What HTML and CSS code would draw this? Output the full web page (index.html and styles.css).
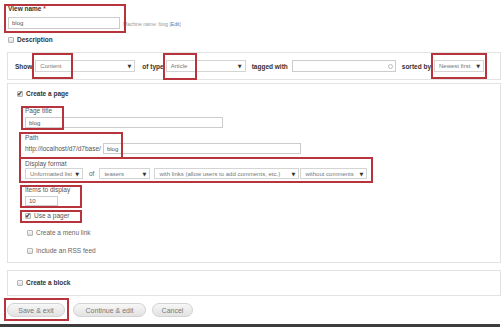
FILE: index.html
```html
<!DOCTYPE html>
<html lang="en">
<head>
  <meta charset="UTF-8">
  <title>Add new view</title>
  <link rel="stylesheet" href="styles.css">
</head>
<body>
  <div class="page">

    <!-- view name -->
    <div class="view-name">
      <div class="label">View name <span class="req">*</span></div>
      <div class="name-row">
        <input class="input name-input" type="text" value="blog">
        <span class="machine">Machine name: blog [<a href="#">Edit</a>]</span>
      </div>
    </div>
    <div class="check bold desc"><span class="box"></span>Description</div>

    <!-- show row -->
    <div class="set show-set">
      <div class="show-row">
        <span class="bold">Show</span>
        <span class="select sel-content">Content <b>&#9660;</b></span>
        <span class="bold of-type">of type</span>
        <span class="select sel-article">Article <b>&#9660;</b></span>
        <span class="bold tagged">tagged with</span>
        <span class="input tag-input"><i class="throbber"></i></span>
        <span class="bold sorted">sorted by</span>
        <span class="select sel-sort">Newest first <b>&#9660;</b></span>
      </div>
    </div>

    <!-- page settings -->
    <div class="set page-set">
      <div class="check bold page-check"><span class="box on">&#10004;</span>Create a page</div>
      <div class="page-opts">
        <div class="field">
          <div class="small-label">Page title</div>
          <input class="input title-input" type="text" value="blog">
        </div>
        <div class="field path-field">
          <div class="small-label">Path</div>
          <div class="path-row">
            <span>http://localhost/d7/d7base/</span>
            <input class="input path-input" type="text" value="blog">
          </div>
        </div>
        <div class="field format-field">
          <div class="small-label">Display format</div>
          <div class="format-row">
            <span class="select sel-format">Unformatted list <b>&#9660;</b></span>
            <span class="of">of</span>
            <span class="select sel-teasers">teasers <b>&#9660;</b></span>
            <span class="select sel-links">with links (allow users to add comments, etc.) <b>&#9660;</b></span>
            <span class="select sel-comments">without comments <b>&#9660;</b></span>
          </div>
        </div>
        <div class="field items-field">
          <div class="small-label">Items to display</div>
          <input class="input items-input" type="text" value="10">
        </div>
        <div class="check pager"><span class="box on">&#10004;</span>Use a pager</div>
        <div class="check menu-link"><span class="box"></span>Create a menu link</div>
        <div class="check rss"><span class="box"></span>Include an RSS feed</div>
      </div>
    </div>

    <!-- block settings -->
    <div class="set block-set">
      <div class="check bold"><span class="box"></span>Create a block</div>
    </div>

    <div class="actions">
      <button class="btn btn-save">Save &amp; exit</button>
      <button class="btn btn-continue">Continue &amp; edit</button>
      <button class="btn btn-cancel">Cancel</button>
    </div>
    <div class="bottom-bar"></div>

    <!-- red highlight boxes drawn over the form -->
    <div class="mark mark-name"></div>
    <div class="mark mark-content"></div>
    <div class="mark mark-article"></div>
    <div class="mark mark-sort"></div>
    <div class="mark mark-title"></div>
    <div class="mark mark-path"></div>
    <div class="mark mark-format"></div>
    <div class="mark mark-items"></div>
    <div class="mark mark-pager"></div>
    <div class="mark mark-save"></div>
  </div>
</body>
</html>
```

FILE: styles.css
```css
body {
  margin: 0;
  background: #fff;
  font-family: "Liberation Sans", Arial, sans-serif;
  font-size: 6.5px;
  color: #444;
}
.page {
  position: relative;
  width: 502px;
  height: 327px;
  overflow: hidden;
}
.bold {
  font-weight: bold;
  color: #333;
}
.input {
  box-sizing: border-box;
  display: inline-block;
  height: 11px;
  margin: 0;
  padding: 0 3px;
  border: 1px solid #ccc;
  background: #fff;
  font-family: inherit;
  font-size: 6px;
  color: #555;
  outline: none;
}
.select {
  box-sizing: border-box;
  display: inline-flex;
  align-items: center;
  justify-content: space-between;
  height: 12px;
  padding: 0 3px 0 4px;
  border: 1px solid #d4d4d4;
  background: #fff;
  font-size: 6px;
  color: #777;
  white-space: nowrap;
}
.select b {
  font-family: "DejaVu Sans", sans-serif;
  font-size: 5px;
  color: #333;
}

/* view name */
.view-name {
  padding: 4px 0 0 8px;
}
.label {
  font-weight: bold;
  color: #333;
  line-height: 10px;
}
.req {
  color: #c33;
}
.name-row {
  display: flex;
  align-items: center;
  margin-top: 3px;
}
.name-input {
  width: 112px;
  height: 12px;
}
.machine {
  margin-left: 3px;
  margin-top: 1px;
  font-size: 5px;
  color: #999;
}
.machine a {
  color: #3a7dc0;
  text-decoration: none;
}

/* checkboxes */
.check {
  display: flex;
  align-items: center;
  height: 10px;
  line-height: 10px;
}
.box {
  position: relative;
  box-sizing: border-box;
  width: 6px;
  height: 6px;
  margin-right: 3px;
  border: 1px solid #b5b5b5;
  border-radius: 1px;
  background: linear-gradient(#fafafa, #ddd);
}
.box.on {
  font-family: "DejaVu Sans", sans-serif;
  font-size: 7px;
  line-height: 4px;
  color: #333;
  text-indent: -1px;
}
.desc {
  margin: 6px 0 0 8px;
}

/* fieldsets */
.set {
  box-sizing: border-box;
  width: 494px;
  margin-left: 7px;
  border: 1px solid #e2e2e2;
  background: #fff;
}
.show-set {
  margin-top: 7px;
  padding: 7px 7px;
}
.show-row {
  display: flex;
  align-items: center;
  height: 12px;
}
.sel-content {
  width: 100px;
  margin-left: 3px;
}
.of-type {
  margin-left: 7px;
}
.sel-article {
  width: 80px;
  margin-left: 2px;
}
.tagged {
  margin-left: 6px;
}
.tag-input {
  position: relative;
  width: 104px;
  height: 12px;
  margin-left: 4px;
}
.throbber {
  position: absolute;
  right: 2px;
  top: 3px;
  width: 3px;
  height: 3px;
  border: 1px solid #bbb;
  border-radius: 50%;
}
.sorted {
  margin-left: 6px;
}
.sel-sort {
  width: 50px;
  margin-left: 3px;
}

/* create a page */
.page-set {
  margin-top: 3px;
  padding: 5px 0 6px 9px;
}
.page-opts {
  padding-left: 8px;
}
.field {
  margin-top: 7px;
}
.small-label {
  line-height: 9px;
  color: #555;
}
.title-input {
  width: 198px;
  margin-top: 2px;
}
.path-field {
  margin-top: 5px;
}
.path-row {
  display: flex;
  align-items: center;
  margin-top: 1px;
  color: #555;
}
.path-input {
  width: 198px;
  margin-left: 2px;
}
.format-field {
  margin-top: 5px;
}
.format-row {
  display: flex;
  align-items: center;
  height: 11px;
}
.format-row .select {
  height: 11px;
}
.sel-format {
  width: 58px;
}
.of {
  margin: 0 5px 0 6px;
  color: #666;
}
.sel-teasers {
  width: 51px;
}
.sel-links {
  width: 145px;
  margin-left: 4px;
}
.sel-comments {
  width: 67px;
  margin-left: 1px;
}
.items-field {
  margin-top: 6px;
}
.items-input {
  width: 33px;
  height: 10px;
  margin-top: 2px;
}
.pager {
  margin-top: 5px;
  color: #555;
}
.menu-link {
  margin: 7px 0 0 2px;
  color: #666;
}
.rss {
  margin: 8px 0 0 2px;
  color: #666;
}

/* create a block */
.block-set {
  margin-top: 7px;
  padding: 7px 0 7px 9px;
}

/* buttons */
.actions {
  display: flex;
  margin: 7px 0 0 7px;
}
.btn {
  box-sizing: border-box;
  height: 14px;
  padding: 0;
  border: 1px solid #d2d2d2;
  border-radius: 8px;
  background: linear-gradient(#f7f7f7, #e2e2e2);
  font-family: inherit;
  font-size: 7px;
  color: #777;
}
.btn-save {
  width: 58px;
}
.btn-continue {
  width: 73px;
  margin-left: 8px;
}
.btn-cancel {
  width: 41px;
  margin-left: 6px;
}
.bottom-bar {
  width: 500px;
  height: 3px;
  margin-top: 7px;
  background: #3d3d3d;
}

/* red annotation boxes */
.mark {
  position: absolute;
  box-sizing: border-box;
  border: 2px solid #b8343c;
}
.mark-name { left: 4px; top: 4px; width: 122px; height: 29px; }
.mark-content { left: 32px; top: 53px; width: 41px; height: 26px; }
.mark-article { left: 163px; top: 53px; width: 34px; height: 27px; }
.mark-sort { left: 431px; top: 53px; width: 56px; height: 26px; }
.mark-title { left: 21px; top: 106px; width: 43px; height: 24px; }
.mark-path { left: 19px; top: 132px; width: 104px; height: 27px; }
.mark-format { left: 19px; top: 157px; width: 354px; height: 26px; }
.mark-items { left: 20px; top: 185px; width: 62px; height: 23px; }
.mark-pager { left: 20px; top: 210px; width: 62px; height: 13px; }
.mark-save { left: 4px; top: 298px; width: 65px; height: 23px; }
```
